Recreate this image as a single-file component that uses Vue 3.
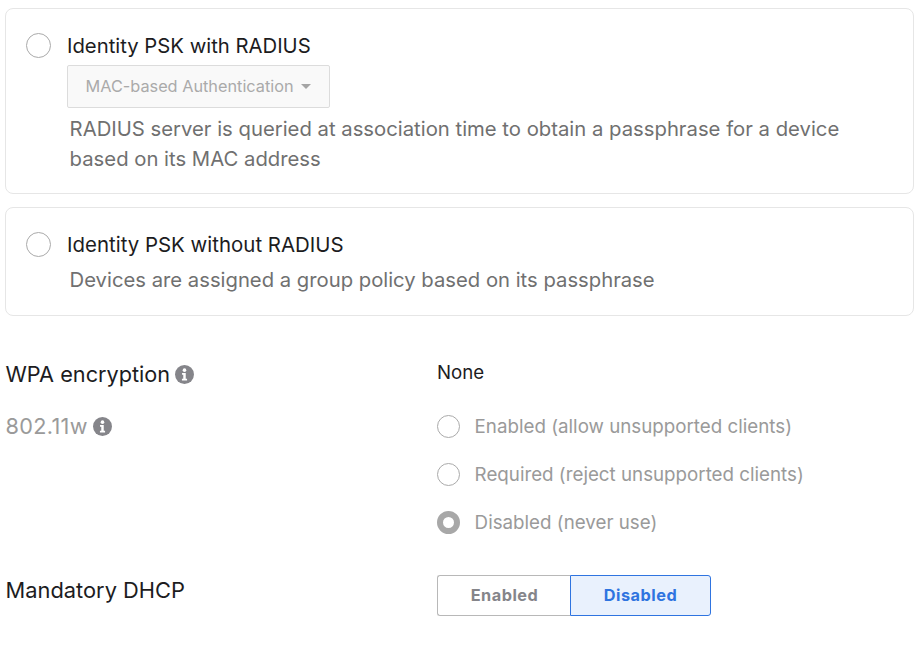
<script setup>
const wifiOptions = [
  { label: "Enabled (allow unsupported clients)", checked: false },
  { label: "Required (reject unsupported clients)", checked: false },
  { label: "Disabled (never use)", checked: true },
];
</script>

<template>
  <div class="page">
    <div class="card card-radius">
      <span class="radio-large"></span>
      <div class="card-body">
        <div class="card-title">Identity PSK with RADIUS</div>
        <div class="dropdown">
          MAC-based Authentication
          <span class="caret"></span>
        </div>
        <p class="card-desc">
          RADIUS server is queried at association time to obtain a passphrase for a device<br />based on its MAC address
        </p>
      </div>
    </div>

    <div class="card card-plain">
      <span class="radio-large"></span>
      <div class="card-body">
        <div class="card-title wide">Identity PSK without RADIUS</div>
        <p class="card-desc second">Devices are assigned a group policy based on its passphrase</p>
      </div>
    </div>

    <div class="row row-wpa">
      <div class="row-label">
        WPA encryption
        <svg class="info" viewBox="0 0 20 20">
          <circle cx="10" cy="10" r="10" fill="#85858a" />
          <circle cx="10" cy="5.4" r="1.9" fill="#fff" />
          <path d="M7.4 8.5h3.9v6h1.4v1.8H7.3v-1.8h1.4v-4.2H7.4z" fill="#fff" />
        </svg>
      </div>
      <div class="row-value">None</div>
    </div>

    <div class="row row-wifi">
      <div class="row-label muted">
        802.11w
        <svg class="info" viewBox="0 0 20 20">
          <circle cx="10" cy="10" r="10" fill="#85858a" />
          <circle cx="10" cy="5.4" r="1.9" fill="#fff" />
          <path d="M7.4 8.5h3.9v6h1.4v1.8H7.3v-1.8h1.4v-4.2H7.4z" fill="#fff" />
        </svg>
      </div>
      <div class="radio-list">
        <div v-for="opt in wifiOptions" :key="opt.label" class="radio-row">
          <span class="radio-small" :class="{ checked: opt.checked }"></span>
          {{ opt.label }}
        </div>
      </div>
    </div>

    <div class="row row-dhcp">
      <div class="row-label dhcp-label">Mandatory DHCP</div>
      <div class="toggle">
        <button type="button" class="toggle-btn">Enabled</button>
        <button type="button" class="toggle-btn active">Disabled</button>
      </div>
    </div>
  </div>
</template>

<style>
html,
body {
  background: #fff;
}
</style>

<style scoped>
.page {
  width: 909px;
  padding: 8px 0 0 5px;
  font-family: Inter, "Liberation Sans", sans-serif;
  color: #1c1c1e;
}

.card {
  display: flex;
  border: 1px solid #e6e6e6;
  border-radius: 8px;
  padding-left: 20px;
  box-sizing: border-box;
}

.card-radius {
  height: 186px;
  padding-top: 24px;
}

.card-plain {
  height: 109px;
  margin-top: 13px;
  padding-top: 24px;
}

.radio-large {
  width: 25px;
  height: 25px;
  flex: none;
  box-sizing: border-box;
  border: 1px solid #aaa;
  border-radius: 50%;
  background: #fff;
}

.card-body {
  margin-left: 16px;
}

.card-title {
  font-size: 20.3px;
  line-height: 25px;
}

.card-title.wide {
  font-size: 20.45px;
}

.dropdown {
  display: flex;
  align-items: center;
  width: 263px;
  height: 43px;
  margin-top: 7px;
  padding: 0 0 1px 17.5px;
  box-sizing: border-box;
  border: 1px solid #dcdcdc;
  border-radius: 2px;
  background: #f9f9f9;
  color: #aaa;
  font-size: 16.3px;
}

.caret {
  width: 0;
  height: 0;
  margin-left: 7.5px;
  border-left: 5px solid transparent;
  border-right: 5px solid transparent;
  border-top: 5px solid #a5a5a5;
}

.card-desc {
  margin: 6px 0 0 2.6px;
  font-size: 20.3px;
  line-height: 30px;
  color: #707070;
}

.card-desc.second {
  margin-top: 8px;
  font-size: 20.25px;
}

.row {
  display: flex;
}

.row-label {
  display: flex;
  align-items: center;
  gap: 4.5px;
  width: 431.5px;
  flex: none;
  margin-left: 0.5px;
  font-size: 21.7px;
  height: 28px;
}

.row-label.muted {
  gap: 5.5px;
  color: #9a9a9a;
  letter-spacing: 0.3px;
}

.dhcp-label {
  margin-top: 1px;
  font-size: 21.85px;
}

.info {
  width: 19px;
  height: 19px;
}

.row-value {
  font-size: 18.7px;
  line-height: 28px;
  margin-top: -1px;
}

.row-wpa {
  margin-top: 44px;
}

.row-wifi {
  margin-top: 24px;
}

.radio-list {
  display: flex;
  flex-direction: column;
  gap: 24px;
  padding-top: 2px;
}

.radio-row {
  display: flex;
  align-items: center;
  gap: 14.6px;
  height: 24px;
  font-size: 18.75px;
  color: #9a9a9a;
}

.radio-small {
  width: 23px;
  height: 23px;
  box-sizing: border-box;
  border: 1px solid #aaa;
  border-radius: 50%;
}

.radio-small.checked {
  border: 6px solid #a8a8a8;
}

.row-dhcp {
  margin-top: 41px;
}

.toggle {
  display: flex;
}

.toggle-btn {
  height: 41px;
  width: 133px;
  padding: 0 0 1px 1px;
  box-sizing: border-box;
  border: 1px solid #b8b8b8;
  border-right: none;
  border-radius: 3px 0 0 3px;
  background: #fff;
  color: #85858a;
  font-family: inherit;
  font-size: 16.3px;
  font-weight: 700;
  letter-spacing: 0.5px;
}

.toggle-btn.active {
  width: 141px;
  padding-left: 0;
  border: 1px solid #2f74e0;
  border-radius: 0 3px 3px 0;
  background: #e9f1fd;
  color: #2f74e0;
}
</style>
